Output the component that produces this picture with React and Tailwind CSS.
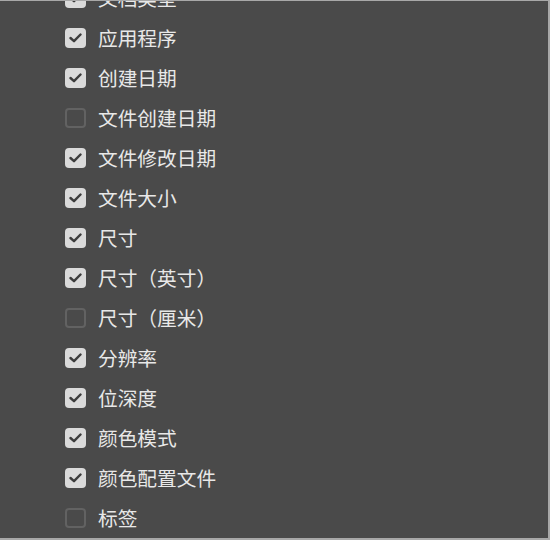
const items = [
  { label: '文档类型', checked: true },
  { label: '应用程序', checked: true },
  { label: '创建日期', checked: true },
  { label: '文件创建日期', checked: false },
  { label: '文件修改日期', checked: true },
  { label: '文件大小', checked: true },
  { label: '尺寸', checked: true },
  { label: '尺寸（英寸）', checked: true },
  { label: '尺寸（厘米）', checked: false },
  { label: '分辨率', checked: true },
  { label: '位深度', checked: true },
  { label: '颜色模式', checked: true },
  { label: '颜色配置文件', checked: true },
  { label: '标签', checked: false },
];

function Box({ checked }) {
  if (!checked) {
    return <span className="w-[21px] h-[20px] rounded-[4px] border-2 border-[#626262] shrink-0" />;
  }
  return (
    <span className="w-[21px] h-[20px] rounded-[4px] bg-[#dadada] shrink-0 flex items-center justify-center">
      <svg width="13" height="10" viewBox="0 0 13 10" fill="none">
        <path d="M1.5 5 L5 8.2 L11.5 1.5" stroke="#3c3c3c" strokeWidth="2.4" strokeLinecap="round" strokeLinejoin="round" />
      </svg>
    </span>
  );
}

export default function App() {
  return (
    <div className="w-[550px] h-[543px] bg-white overflow-hidden" style={{ fontFamily: '"Noto Sans CJK SC", "Noto Sans", sans-serif' }}>
      <div className="h-[540px] bg-[#4a4a4a] border-t border-r-2 border-b-2 border-[#a8a8a8] overflow-hidden">
        <ul className="-mt-[23px] pl-[65px]">
          {items.map((it) => (
            <li key={it.label} className="h-[40px] flex items-center gap-[12px]">
              <Box checked={it.checked} />
              <span className="text-[19.7px] leading-none text-[#e8e8e8]">{it.label}</span>
            </li>
          ))}
        </ul>
      </div>
    </div>
  );
}
